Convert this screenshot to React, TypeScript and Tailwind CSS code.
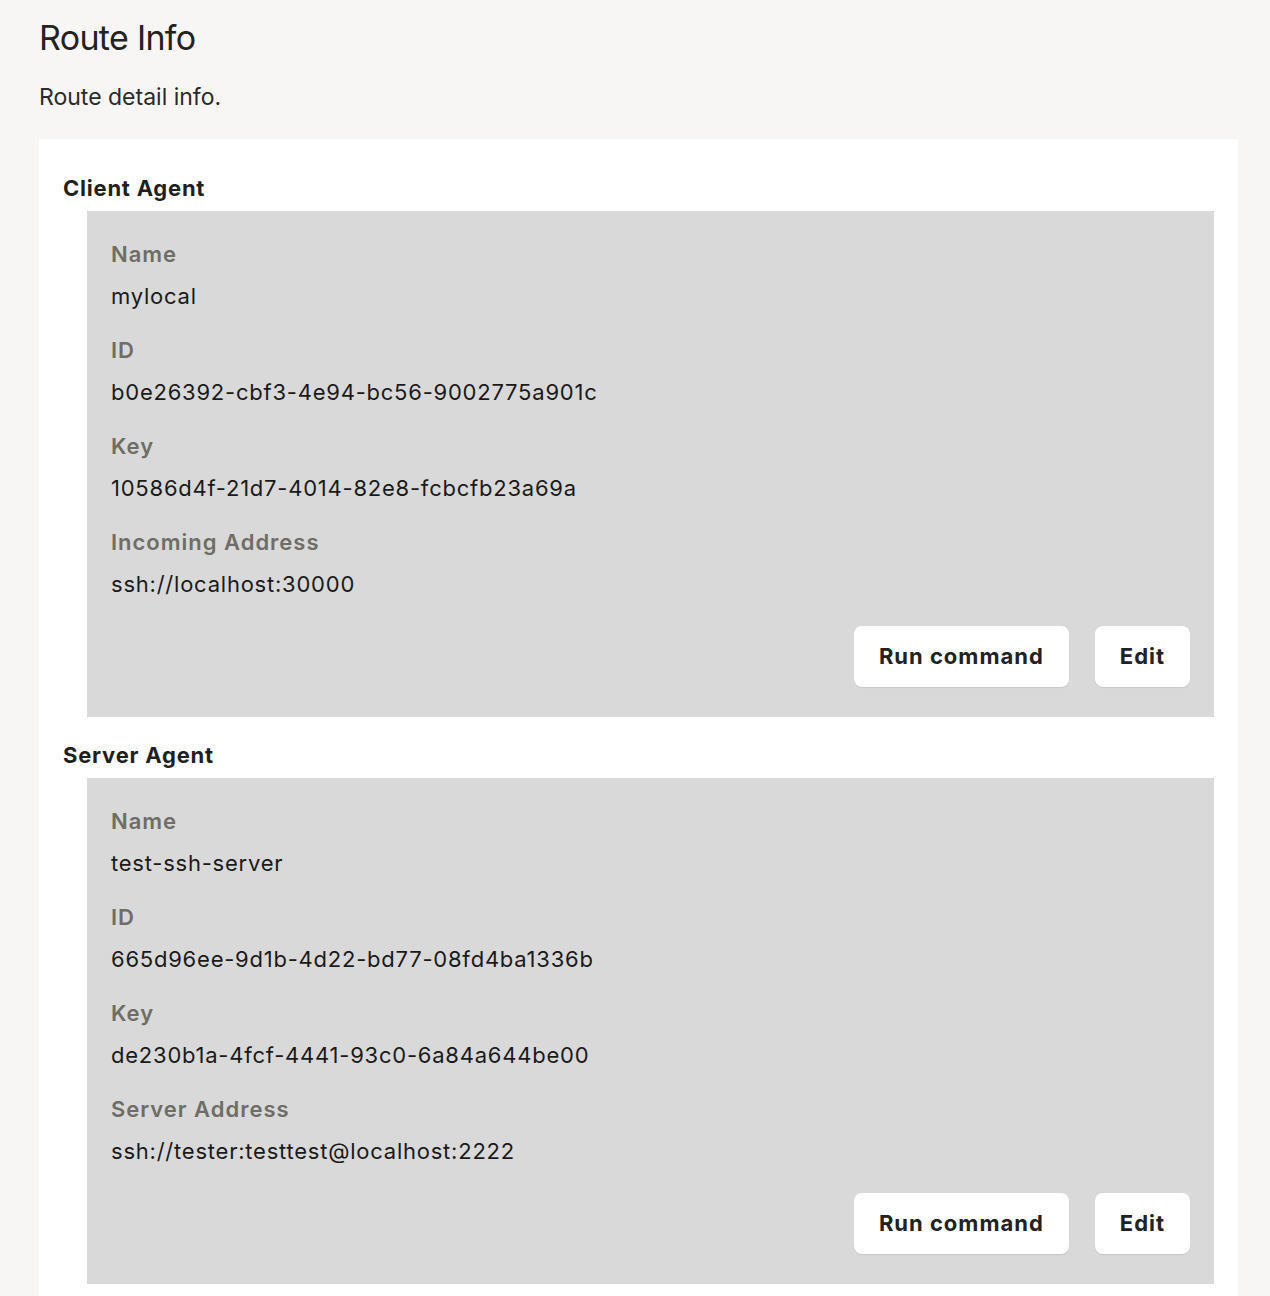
const agents = [
  {
    title: "Client Agent",
    fields: [
      { label: "Name", value: "mylocal" },
      { label: "ID", value: "b0e26392-cbf3-4e94-bc56-9002775a901c" },
      { label: "Key", value: "10586d4f-21d7-4014-82e8-fcbcfb23a69a" },
      { label: "Incoming Address", value: "ssh://localhost:30000" },
    ],
  },
  {
    title: "Server Agent",
    fields: [
      { label: "Name", value: "test-ssh-server" },
      { label: "ID", value: "665d96ee-9d1b-4d22-bd77-08fd4ba1336b" },
      { label: "Key", value: "de230b1a-4fcf-4441-93c0-6a84a644be00" },
      { label: "Server Address", value: "ssh://tester:testtest@localhost:2222" },
    ],
  },
];

function AgentPanel({ title, fields }: { title: string; fields: { label: string; value: string }[] }) {
  return (
    <section>
      <h2 className="text-[22px] font-bold leading-[34px] tracking-[0.035em] text-[#1f1f1f]">{title}</h2>
      <div className="ml-6 mt-[6px] bg-[#d9d9d9] px-6 pb-[30px] pt-6">
        {fields.map((f) => (
          <div key={f.label} className="mb-4">
            <p className="text-[22px] font-semibold leading-[38px] tracking-[0.045em] text-[#6e6d66]">{f.label}</p>
            <p className="mt-1 text-[22px] leading-[38px] tracking-[0.035em] text-[#1a1a1a]">{f.value}</p>
          </div>
        ))}
        <div className="mt-[23px] flex justify-end gap-[26px]">
          <button
            type="button"
            className="h-[61px] rounded-lg bg-white px-[25px] text-[22px] font-bold tracking-[0.045em] text-[#222] shadow-[0_1px_1px_rgba(0,0,0,0.08)]"
          >
            Run command
          </button>
          <button
            type="button"
            className="h-[61px] rounded-lg bg-white px-[25px] text-[22px] font-bold tracking-[0.045em] text-[#222] shadow-[0_1px_1px_rgba(0,0,0,0.08)]"
          >
            Edit
          </button>
        </div>
      </div>
    </section>
  );
}

export default function App() {
  return (
    <div className="min-h-[1296px] bg-[#f7f6f4] px-[39px] pt-[18px] font-['Inter',sans-serif] text-[#1f1f1f]">
      <h1 className="text-[34px] font-normal leading-[40px] tracking-[-0.02em] text-[#222]">Route Info</h1>
      <p className="mt-[25px] text-[23px] leading-[28px] text-[#2a2a2a]">Route detail info.</p>
      <div className="mr-[-7px] mt-[28px] space-y-[21px] bg-white px-6 pb-6 pt-[32px]">
        {agents.map((a) => (
          <AgentPanel key={a.title} title={a.title} fields={a.fields} />
        ))}
      </div>
    </div>
  );
}
